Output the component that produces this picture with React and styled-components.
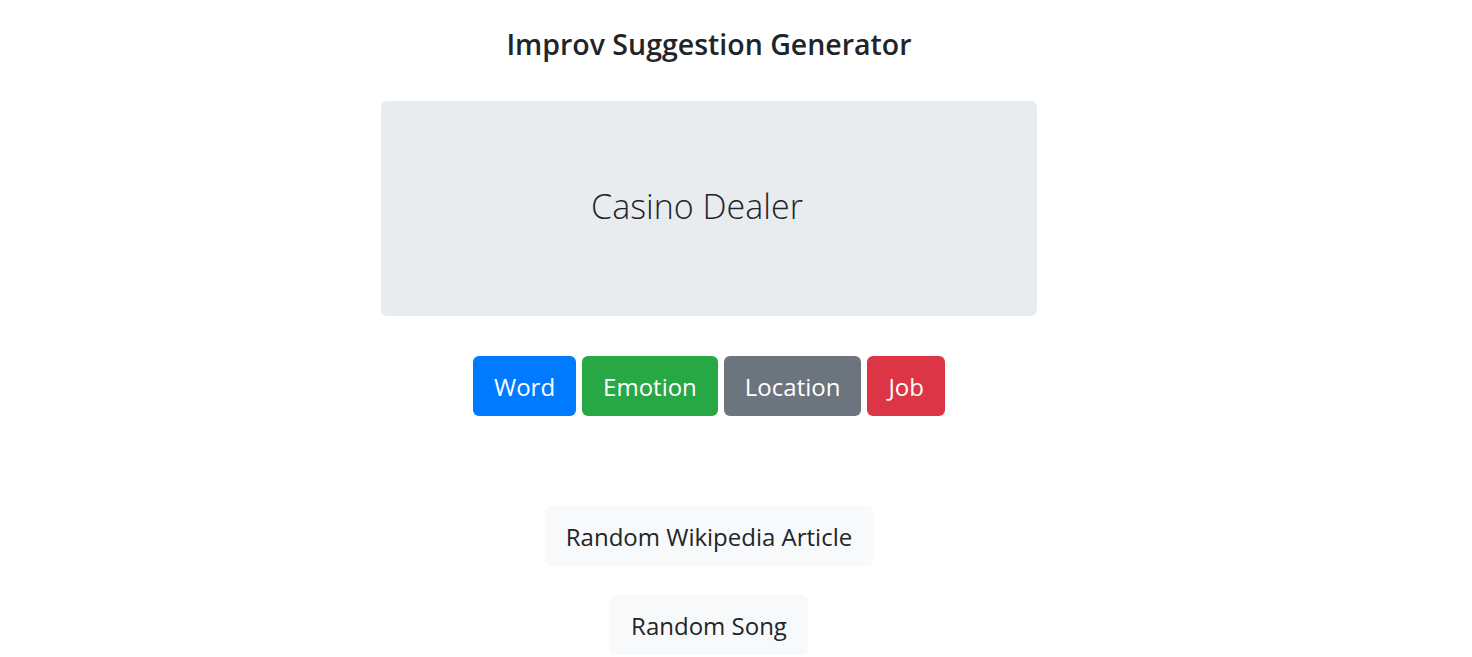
import styled, { createGlobalStyle } from 'styled-components';

const GlobalStyle = createGlobalStyle`
  html, body {
    margin: 0;
    padding: 0;
    background: #ffffff;
  }
  body {
    font-family: 'Open Sans', 'Noto Sans', sans-serif;
    color: #212529;
  }
`;

const Page = styled.div`
  width: 1418px;
  display: flex;
  flex-direction: column;
  align-items: center;
  padding-top: 26px;
`;

const Title = styled.h1`
  margin: 0;
  font-size: 28.5px;
  line-height: 36px;
  font-weight: 600;
  color: #212529;
`;

const Jumbotron = styled.div`
  width: 656px;
  height: 215px;
  margin-top: 39px;
  padding: 0 24px 6px 0;
  box-sizing: border-box;
  background: #e9ecef;
  border-radius: 6px;
  display: flex;
  align-items: center;
  justify-content: center;
`;

const Suggestion = styled.p`
  margin: 0;
  font-size: 34px;
  font-weight: 300;
  color: #212529;
`;

const ButtonRow = styled.div`
  display: flex;
  gap: 6px;
  margin-top: 40px;
`;

const colors = {
  primary: '#007bff',
  success: '#28a745',
  secondary: '#6c757d',
  danger: '#dc3545',
  light: '#f8f9fa',
};

const Button = styled.button`
  height: 60px;
  padding: 0 21px;
  border: none;
  border-radius: 6px;
  background: ${(p) => colors[p.$variant]};
  color: ${(p) => (p.$variant === 'light' ? '#212529' : '#ffffff')};
  font-family: 'Open Sans', 'Noto Sans', sans-serif;
  font-size: 24px;
  font-weight: 400;
  cursor: pointer;
`;

const Extras = styled.div`
  display: flex;
  flex-direction: column;
  align-items: center;
  gap: 29px;
  margin-top: 90px;
`;

export default function App() {
  return (
    <>
      <GlobalStyle />
      <Page>
        <Title>Improv Suggestion Generator</Title>
        <Jumbotron>
          <Suggestion>Casino Dealer</Suggestion>
        </Jumbotron>
        <ButtonRow>
          <Button $variant="primary">Word</Button>
          <Button $variant="success">Emotion</Button>
          <Button $variant="secondary">Location</Button>
          <Button $variant="danger">Job</Button>
        </ButtonRow>
        <Extras>
          <Button $variant="light">Random Wikipedia Article</Button>
          <Button $variant="light">Random Song</Button>
        </Extras>
      </Page>
    </>
  );
}
